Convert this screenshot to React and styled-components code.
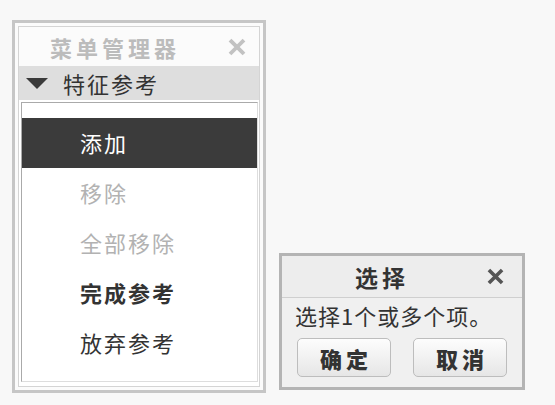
import styled, { createGlobalStyle } from 'styled-components';

const GlobalStyle = createGlobalStyle`
    html, body {
        margin: 0;
        padding: 0;
        background: #f8f8f8;
    }
    body {
        font-family: "Noto Sans CJK SC", "Liberation Sans", sans-serif;
        color: #333;
    }
`

const menuItems = [
    { label: '添加', kind: 'active' },
    { label: '移除', kind: 'disabled' },
    { label: '全部移除', kind: 'disabled' },
    { label: '完成参考', kind: 'bold' },
    { label: '放弃参考', kind: 'normal' },
];

const CloseMark = ({ size = 16, color = '#bbb' }) => (
    <svg width={size} height={size} viewBox="0 0 16 16">
        <path d="M3 3 L13 13 M13 3 L3 13" stroke={color} strokeWidth="3.4" strokeLinecap="square" />
    </svg>
);

const App = () => {
    return (
        <Page>
            <GlobalStyle />
            <MenuPanel>
                <MenuFrame>
                    <MenuTitle>
                        <TitleText>菜单管理器</TitleText>
                        <CloseBtn><CloseMark size={18} color="#c2c2c2" /></CloseBtn>
                    </MenuTitle>
                    <Section>
                        <Triangle viewBox="0 0 22 11" width="22" height="11">
                            <path d="M0 0 L22 0 L11 11 Z" fill="#3a3a3a" />
                        </Triangle>
                        <SectionText>特征参考</SectionText>
                    </Section>
                    <ListWrap>
                        <List>
                            <Spacer />
                            {menuItems.map(item => (
                                <Item key={item.label} kind={item.kind}>{item.label}</Item>
                            ))}
                        </List>
                    </ListWrap>
                </MenuFrame>
            </MenuPanel>
            <Dialog>
                <DialogHead>
                    <DialogTitle>选择</DialogTitle>
                    <DialogClose><CloseMark size={17} color="#555" /></DialogClose>
                </DialogHead>
                <DialogBody>
                    <Message>选择1个或多个项。</Message>
                    <Buttons>
                        <Button>确定</Button>
                        <Button>取消</Button>
                    </Buttons>
                </DialogBody>
            </Dialog>
        </Page>
    )
}

export default App

const Page = styled.div`
    display: flex;
    align-items: flex-start;
    gap: 13px;
    padding: 20px 0 0 12px;
    width: 555px;
    height: 405px;
    box-sizing: border-box;
`
const MenuPanel = styled.div`
    width: 254px;
    height: 373px;
    box-sizing: border-box;
    border: 3px solid #c6c6c6;
    background: #fbfbfb;
    padding: 3px;
    display: flex;
`
const MenuFrame = styled.div`
    flex: 1;
    display: flex;
    flex-direction: column;
    border: 1px solid #d4d4d4;
`
const MenuTitle = styled.div`
    height: 39px;
    display: flex;
    align-items: center;
    padding: 0 0 0 31px;
    position: relative;
`
const TitleText = styled.span`
    font-size: 22px;
    font-weight: 700;
    letter-spacing: 4px;
    color: #bcbcbc;
`
const CloseBtn = styled.span`
    position: absolute;
    right: 13px;
    top: 11px;
    display: flex;
`
const Section = styled.div`
    height: 34px;
    background: #dedede;
    display: flex;
    align-items: center;
    padding-left: 7px;
    gap: 15px;
`
const Triangle = styled.svg`
    display: block;
`
const SectionText = styled.span`
    font-size: 22px;
    letter-spacing: 2px;
    color: #333;
`
const ListWrap = styled.div`
    flex: 1;
    background: #fff;
    padding: 2px 1px 4px 2px;
    display: flex;
`
const List = styled.div`
    flex: 1;
    border: 1px solid #aaa;
    border-right-color: #ddd;
    border-bottom-color: #ddd;
    display: flex;
    flex-direction: column;
`
const Spacer = styled.div`
    height: 15px;
`
const Item = styled.div`
    height: 50px;
    display: flex;
    align-items: center;
    padding-left: 58px;
    padding-bottom: 3px;
    box-sizing: border-box;
    font-size: 22px;
    letter-spacing: 2px;
    font-weight: ${p => p.kind === 'bold' ? 700 : 400};
    color: ${p => p.kind === 'active' ? '#fff' : p.kind === 'disabled' ? '#b2b2b2' : '#333'};
    background: ${p => p.kind === 'active' ? '#3b3b3b' : 'transparent'};
`
const Dialog = styled.div`
    margin-top: 233px;
    width: 246px;
    height: 137px;
    box-sizing: border-box;
    border: 3px solid #b4b4b4;
    background: #f0f0f0;
    display: flex;
    flex-direction: column;
`
const DialogHead = styled.div`
    height: 41px;
    background: #ededed;
    border-bottom: 1px solid #cfcfcf;
    display: flex;
    align-items: center;
    justify-content: center;
    position: relative;
`
const DialogTitle = styled.span`
    font-size: 23px;
    font-weight: 700;
    letter-spacing: 4px;
    color: #333;
    margin-right: 40px;
`
const DialogClose = styled.span`
    position: absolute;
    right: 18px;
    top: 12px;
    display: flex;
`
const DialogBody = styled.div`
    flex: 1;
    display: flex;
    flex-direction: column;
    padding: 0 12px 0 13px;
`
const Message = styled.div`
    font-size: 22px;
    letter-spacing: 1px;
    height: 40px;
    padding-bottom: 6px;
    box-sizing: border-box;
    display: flex;
    align-items: center;
    white-space: nowrap;
    color: #333;
`
const Buttons = styled.div`
    display: flex;
    gap: 22px;
    padding-left: 2px;
`
const Button = styled.button`
    width: 94px;
    height: 39px;
    border: 1px solid #bdbdbd;
    border-radius: 5px;
    background: linear-gradient(#fdfdfd, #e6e6e6);
    font-family: "Noto Sans CJK SC", sans-serif;
    font-size: 22px;
    font-weight: 900;
    letter-spacing: 4px;
    color: #333;
    padding: 0 0 0 4px;
    display: flex;
    align-items: center;
    justify-content: center;
`
